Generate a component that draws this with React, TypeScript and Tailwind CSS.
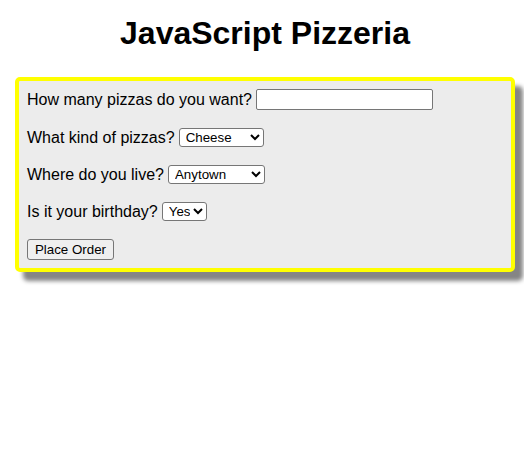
import { useState } from 'react';

export default function App() {
  const [count, setCount] = useState('');
  const [kind, setKind] = useState('Cheese');
  const [town, setTown] = useState('Anytown');
  const [birthday, setBirthday] = useState('Yes');

  const control = "border border-[#767676] rounded-[3px] bg-white text-black text-[13.333px] h-[19px] pl-[2px]";

  return (
    <div className="min-h-[461px] bg-white text-black font-['Liberation_Sans',Arial,sans-serif]">
      <div className="ml-[15px] w-[500px]">
        <h1 className="pt-[15px] text-center text-[32px] leading-[37px] font-bold">JavaScript Pizzeria</h1>

        <form
          className="mt-[25px] border-4 border-[#ffff00] rounded-[5px] bg-[#ececec] px-[8px] py-[8px] shadow-[8px_9px_4px_#858585] text-[16px]"
          onSubmit={(e) => e.preventDefault()}
        >
          <div className="flex items-center h-[21px] gap-[4px]">
            <span>How many pizzas do you want?</span>
            <input
              type="text"
              value={count}
              onChange={(e) => setCount(e.target.value)}
              className="w-[177px] h-[21px] border border-[#767676] rounded-[2px] bg-white px-[2px] text-[13.333px]"
            />
          </div>

          <div className="flex items-center h-[21px] gap-[4px] mt-[17px]">
            <span>What kind of pizzas?</span>
            <select value={kind} onChange={(e) => setKind(e.target.value)} className={control + " w-[85px]"}>
              <option>Cheese</option>
              <option>Pepperoni</option>
              <option>Veggie</option>
            </select>
          </div>

          <div className="flex items-center h-[21px] gap-[4px] mt-[16px]">
            <span>Where do you live?</span>
            <select value={town} onChange={(e) => setTown(e.target.value)} className={control + " w-[97px]"}>
              <option>Anytown</option>
              <option>Somewhereville</option>
              <option>Elsewhere</option>
            </select>
          </div>

          <div className="flex items-center h-[21px] gap-[4px] mt-[16px]">
            <span>Is it your birthday?</span>
            <select value={birthday} onChange={(e) => setBirthday(e.target.value)} className={control + " w-[45px]"}>
              <option>Yes</option>
              <option>No</option>
            </select>
          </div>

          <div className="flex items-center h-[21px] mt-[17px]">
            <button
              type="submit"
              className="h-[21px] w-[87px] border border-[#767676] rounded-[3px] bg-[#efefef] text-[13.333px] text-black"
            >
              Place Order
            </button>
          </div>
        </form>
      </div>
    </div>
  );
}
